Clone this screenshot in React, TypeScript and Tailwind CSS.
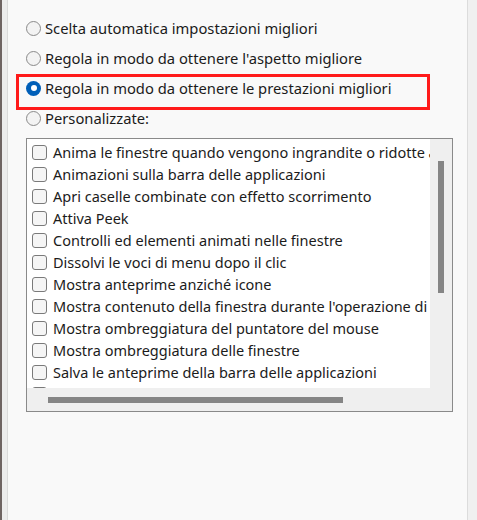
import React from "react";

const radios = [
  { label: "Scelta automatica impostazioni migliori", checked: false },
  { label: "Regola in modo da ottenere l'aspetto migliore", checked: false },
  { label: "Regola in modo da ottenere le prestazioni migliori", checked: true },
  { label: "Personalizzate:", checked: false },
];

const items = [
  "Anima le finestre quando vengono ingrandite o ridotte a icona",
  "Animazioni sulla barra delle applicazioni",
  "Apri caselle combinate con effetto scorrimento",
  "Attiva Peek",
  "Controlli ed elementi animati nelle finestre",
  "Dissolvi le voci di menu dopo il clic",
  "Mostra anteprime anziché icone",
  "Mostra contenuto della finestra durante l'operazione di trascinamento",
  "Mostra ombreggiatura del puntatore del mouse",
  "Mostra ombreggiatura delle finestre",
  "Salva le anteprime della barra delle applicazioni",
  "Smussa gli angoli dei caratteri dello schermo",
];

function Radio({ checked }: { checked: boolean }) {
  if (checked) {
    return (
      <span className="flex h-[15px] w-[15px] shrink-0 items-center justify-center rounded-full bg-[#005fb8]">
        <span className="h-[6px] w-[6px] rounded-full bg-white" />
      </span>
    );
  }
  return <span className="h-[15px] w-[15px] shrink-0 rounded-full border border-[#8a8a8a] bg-[#f3f3f3]" />;
}

export default function App() {
  return (
    <div
      className="flex h-[520px] w-[477px] overflow-hidden text-[#1b1b1b]"
      style={{ fontFamily: '"Noto Sans", "Open Sans", sans-serif' }}
    >
      <div className="flex w-[8px] shrink-0">
        <div className="w-[2px] bg-[#6e6462]" />
        <div className="flex-1 border-r border-[#dadada] bg-[#ececec]" />
      </div>
      <div className="flex flex-1 flex-col bg-[#f9f9f9] pt-[13px]">
        {radios.map((r, i) => (
          <div key={i} className="relative flex h-[30px] items-center gap-[4px] pl-[18px] text-[14.75px] leading-none">
            <Radio checked={r.checked} />
            <span className="whitespace-nowrap">{r.label}</span>
            {r.checked && (
              <div className="pointer-events-none absolute left-[8px] top-[1px] h-[36px] w-[414px] border-[3px] border-[#ff1a1a]" />
            )}
          </div>
        ))}
        <div className="ml-[18px] mt-[5px] flex h-[274px] w-[427px] flex-col border border-[#8a8a8a] bg-[#efefef]">
          <div className="flex h-[249px]">
            <div className="flex w-[403px] flex-col overflow-hidden bg-white pl-[5px] pt-[2px]">
              {items.map((t, i) => (
                <div key={i} className="flex h-[22px] shrink-0 items-center gap-[6px] text-[14.5px] leading-none">
                  <span className="h-[15px] w-[15px] shrink-0 rounded-[3px] border border-[#7a7a7a] bg-[#f5f5f5]" />
                  <span className="whitespace-nowrap">{t}</span>
                </div>
              ))}
            </div>
            <div className="flex flex-1 justify-center pt-[22px]">
              <div className="h-[132px] w-[6px] bg-[#858585]" />
            </div>
          </div>
          <div className="flex flex-1 items-center pl-[21px]">
            <div className="h-[6px] w-[295px] bg-[#858585]" />
          </div>
        </div>
      </div>
      <div className="w-[1px] shrink-0 bg-[#dcdcdc]" />
      <div className="w-[9px] shrink-0 bg-[#f0f0f0]" />
    </div>
  );
}
